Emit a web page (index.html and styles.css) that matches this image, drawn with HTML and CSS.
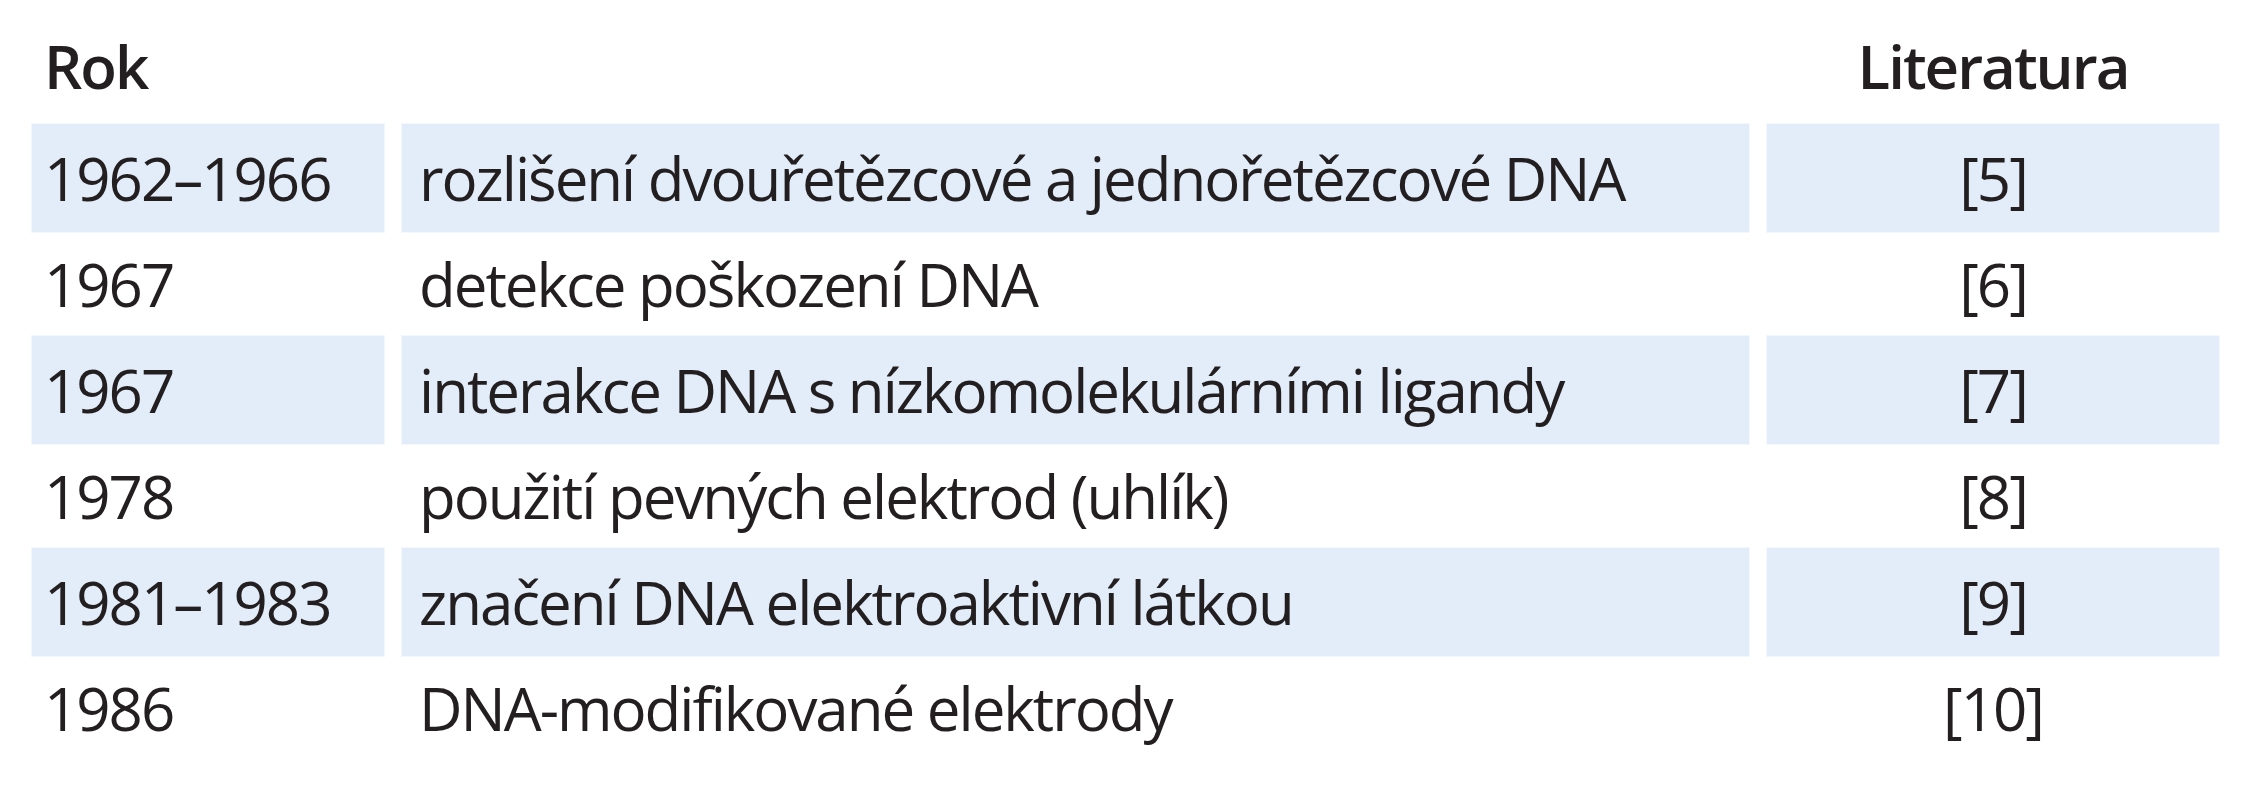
FILE: index.html
```html
<!DOCTYPE html>
<html lang="cs">
<head>
<meta charset="utf-8">
<title>Tabulka</title>
<link rel="stylesheet" href="styles.css">
</head>
<body>
<table class="tbl">
  <colgroup>
    <col class="c-year">
    <col class="c-desc">
    <col class="c-ref">
  </colgroup>
  <thead>
    <tr class="head">
      <th class="year">Rok</th>
      <th class="desc"></th>
      <th class="ref">Literatura</th>
    </tr>
  </thead>
  <tbody>
    <tr class="odd"><td class="year">1962–1966</td><td class="desc">rozlišení dvouřetězcové a jednořetězcové DNA</td><td class="ref">[5]</td></tr>
    <tr class="even"><td class="year">1967</td><td class="desc">detekce poškození DNA</td><td class="ref">[6]</td></tr>
    <tr class="odd"><td class="year">1967</td><td class="desc">interakce DNA s nízkomolekulárními ligandy</td><td class="ref">[7]</td></tr>
    <tr class="even"><td class="year">1978</td><td class="desc">použití pevných elektrod (uhlík)</td><td class="ref">[8]</td></tr>
    <tr class="odd"><td class="year">1981–1983</td><td class="desc">značení DNA elektroaktivní látkou</td><td class="ref">[9]</td></tr>
    <tr class="even"><td class="year">1986</td><td class="desc">DNA-modifikované elektrody</td><td class="ref">[10]</td></tr>
  </tbody>
</table>
</body>
</html>
```
FILE: styles.css
```css
html, body {
  margin: 0;
  padding: 0;
  background: #ffffff;
}

body {
  width: 2244px;
  height: 800px;
  overflow: hidden;
}

.tbl {
  margin: 12px 0 0 14px;
  border-collapse: separate;
  border-spacing: 18px 0;
  table-layout: fixed;
  width: 2223px;
  font-family: "Open Sans", "Liberation Sans", sans-serif;
  font-size: 60px;
  letter-spacing: -2px;
  color: #231f20;
}

.c-year { width: 352px; }
.c-desc { width: 1347px; }
.c-ref  { width: 452px; }

.tbl th,
.tbl td {
  padding: 0;
  white-space: nowrap;
}

.head th {
  height: 112px;
  line-height: 108px;
  vertical-align: top;
  font-weight: 600;
}

.year { text-align: left; padding-left: 12px !important; }
.desc { text-align: left; padding-left: 17px !important; }
.ref  { text-align: center; }

.odd td {
  height: 108px;
  line-height: 108px;
  background: #e2edf9;
  box-shadow: 0 0 0 1px #f3f8fd;
}

.even td {
  height: 104px;
  line-height: 104px;
  background: transparent;
}
```
